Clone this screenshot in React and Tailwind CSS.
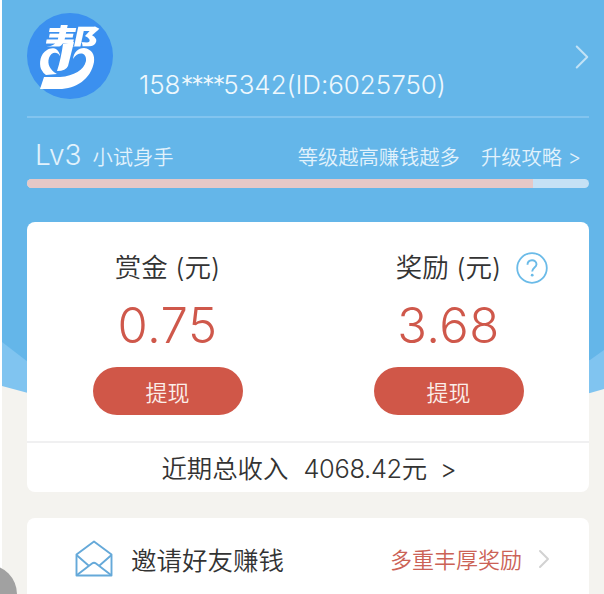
import { ChevronRight } from "lucide-react";

const BALANCES = [
  { label: "赏金 (元)", amount: "0.75", help: false },
  { label: "奖励 (元)", amount: "3.68", help: true },
];

// Round brand mark: slanted character whose lower half is a heart-shaped ribbon.
function Logo() {
  return (
    <svg viewBox="0 0 86 86" className="block h-[86px] w-[86px] overflow-visible">
      <circle cx="43" cy="43" r="43" fill="#3b90ef" />
      <text
        transform="translate(13 48) skewX(-12) scale(1.24 0.96)"
        fontSize="44"
        fontWeight="700"
        fill="#fff"
        className="font-['Noto_Sans_CJK_SC',sans-serif]"
      >
        帮
      </text>
      <path d="M10 33.5H76V56H10Z" fill="#3b90ef" />
      <path d="M36 31L47 29L41 53Q39 58 30 58Q34 46 36 31Z" fill="#fff" />
      <path d="M33 42C31 34 24 34 20 37C13 41 12 50 14 56Q16 60 19 62L30 61C23 57 20 51 22 45C24 39 30 38 33 43Z" fill="#fff" />
      <path
        d="M46 46C47 39 51 35 57 35C65 36 68 42 67 49C64 66 49 76 32 76L13 76L17 64L33 64C47 63 57 57 59 48C60 39 51 38 46 46Z"
        fill="#fff"
      />
    </svg>
  );
}

function HelpIcon() {
  return (
    <svg viewBox="0 0 32 32" fill="none" stroke="#6bbbe8" className="block h-8 w-8">
      <circle cx="16" cy="16" r="14.8" strokeWidth="1.8" />
      <path d="M11.5 12.8C11.5 6.8 20.5 6.8 20.5 12.2C20.5 15.4 16.2 15.6 16.2 19.6" strokeWidth="1.9" />
      <circle cx="16.2" cy="23.2" r="1.4" fill="#6bbbe8" stroke="none" />
    </svg>
  );
}

function EnvelopeIcon() {
  return (
    <svg
      viewBox="0 0 38 38"
      fill="none"
      stroke="#65a9d9"
      strokeWidth="1.9"
      strokeLinejoin="round"
      className="block h-[38px] w-[38px]"
    >
      <path d="M1.5 14.5L19 1.5L36.5 14.5V35.5H1.5Z" />
      <path d="M1.5 15L13.5 25.5M36.5 15L24.5 25.5M2 35L17 23.5Q19 22 21 23.5L36 35" />
    </svg>
  );
}

function Balance({ label, amount, help }) {
  return (
    <div className="flex w-[281px] flex-col items-center">
      <div className="relative mt-[28px] text-[26.5px] leading-[34px] whitespace-nowrap text-[#333]">
        {label}
        {help && (
          <span className="absolute top-[2px] left-[120px]">
            <HelpIcon />
          </span>
        )}
      </div>
      <div className="mt-[12px] text-[49px] leading-[60px] font-light tracking-[0.5px] text-[#cf584b]">{amount}</div>
      <button className="mt-[11px] h-12 w-[150px] rounded-full bg-[#d05748] text-[22px] leading-[52px] text-[#fbeeea]">
        提现
      </button>
    </div>
  );
}

export default function App() {
  return (
    <div className="relative h-[594px] w-[604px] overflow-hidden bg-white pl-[2px] font-['Inter','Noto_Sans_CJK_SC',sans-serif] font-[350]">
      {/* Page backdrop with the folded banner edge */}
      <svg viewBox="0 0 602 594" className="absolute top-0 left-[2px] h-[594px] w-[602px]">
        <rect width="602" height="594" fill="#f4f3ef" />
        <path d="M0 0H602V389L588 393L300 430L26 393L0 386Z" fill="#80c4f0" />
        <path d="M0 0H602V350L588 360L300 410L26 362L0 342Z" fill="#64b6e9" />
      </svg>

      <div className="relative flex flex-col pr-[15px] pl-[25px]">
        <header className="flex h-[118px] border-b-2 border-[#82c4ef] pt-[13px]">
          <Logo />
          <div className="mt-[55px] ml-[26px] text-[26px] leading-[34px] font-light tracking-[-0.05px] whitespace-nowrap text-[#eef8fd]">
            158<span className="tracking-[-2.3px]">****</span>5342(ID:6025750)
          </div>
          <ChevronRight size={42} strokeWidth={1.15} className="mt-[23px] -mr-[14px] ml-auto text-[#c2e2f6]" />
        </header>

        <div className="flex h-[61px] items-baseline pt-[19px] pl-2 text-[20.3px] text-[#e2f2fc]">
          <span className="text-[28px] leading-9 font-light">Lv3</span>
          <span className="ml-[11px]">小试身手</span>
          <span className="ml-auto">等级越高赚钱越多</span>
          <span className="mr-[8px] ml-[21px]">升级攻略 &gt;</span>
        </div>
        <div className="h-[9px] overflow-hidden rounded-full bg-[#c5e1f5]">
          <div className="h-full w-[506px] bg-[#e5c8c7]" />
        </div>

        <section className="mt-[34px] h-[270px] rounded-lg bg-white">
          <div className="flex h-[221px] border-b-2 border-[#f0f0f1]">
            {BALANCES.map((b) => (
              <Balance key={b.label} {...b} />
            ))}
          </div>
          <div className="flex items-center justify-center pl-[2px] text-[25.4px] leading-[52px] text-[#333]">
            <span>近期总收入</span>
            <span className="ml-[15px] tracking-[-0.3px]">4068.42元</span>
            <span className="ml-[13px]">&gt;</span>
          </div>
        </section>

        <section className="mt-[26px] flex h-[90px] items-center rounded-t-lg bg-white pr-[30px] pb-[8px] pl-[48px]">
          <EnvelopeIcon />
          <span className="ml-[18px] pt-[4px] text-[25.5px] text-[#333]">邀请好友赚钱</span>
          <span className="ml-auto pt-[2px] text-[22px] text-[#cb6256]">多重丰厚奖励</span>
          <ChevronRight size={32} strokeWidth={1.5} className="ml-[6px] -mr-px text-[#d2d2d2]" />
        </section>
      </div>

      <div className="absolute top-[565px] left-[-41px] h-[58px] w-[58px] rounded-full bg-[#a1a1a1]" />
    </div>
  );
}
